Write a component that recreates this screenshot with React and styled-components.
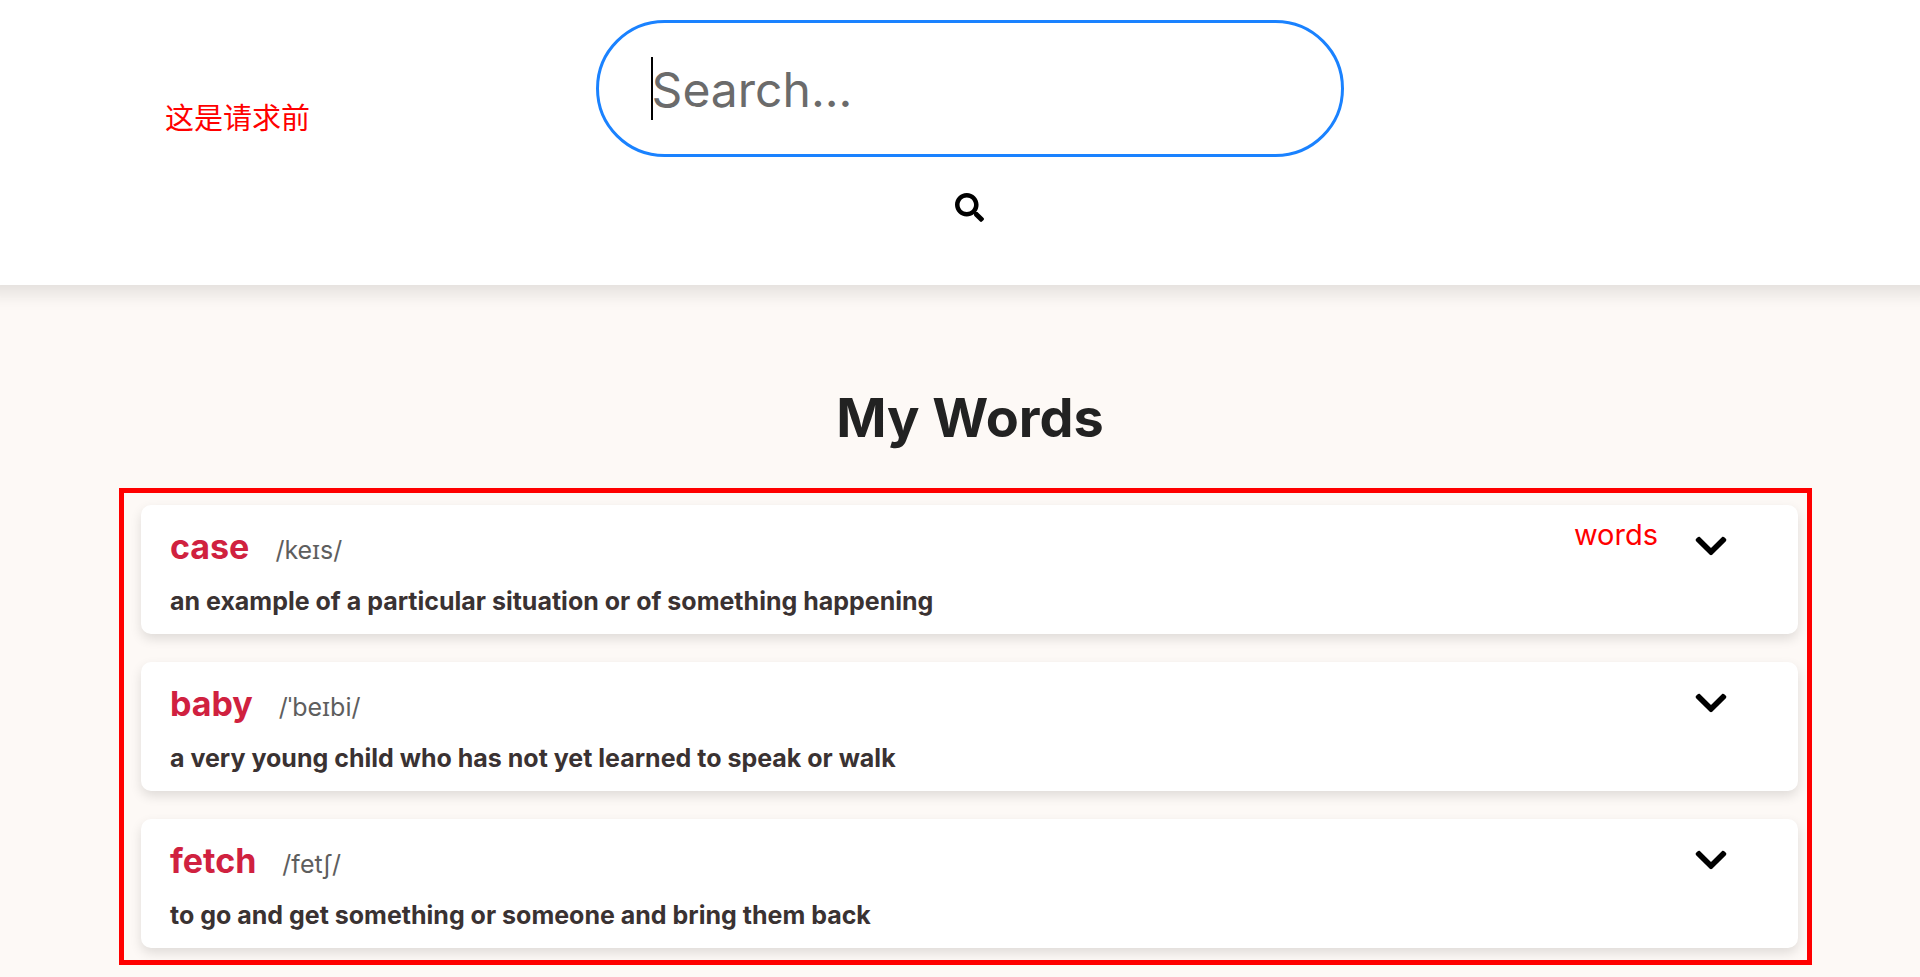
import React from "react";
import styled, { createGlobalStyle } from "styled-components";
import { FaSearch, FaChevronDown } from "react-icons/fa";

const GlobalStyle = createGlobalStyle`
  *, *::before, *::after { box-sizing: border-box; }
  html { background: #fdf9f6; }
  body {
    margin: 0;
    font-family: Inter, "Noto Sans", "Noto Sans CJK SC", sans-serif;
    color: #222;
  }
  h1, h2, p { margin: 0; }
`;

const Header = styled.header`
  position: relative;
  display: flex;
  justify-content: center;
  padding: 20px 0 48px 20px;
  background: #fff;
  box-shadow: 0 -12px 18px 20px rgba(0, 0, 0, 0.11);
`;

const SearchForm = styled.form`
  display: flex;
  flex-direction: column;
  align-items: center;
  gap: 20px;
  width: 39vw;
`;

const SearchField = styled.div`
  position: relative;
  width: 100%;
`;

const SearchInput = styled.input`
  display: block;
  width: 100%;
  height: 137px;
  padding: 2px 53px 0;
  border: 3px solid #1a82ff;
  border-radius: 69px;
  background: #fff;
  font-family: inherit;
  font-size: 48px;
  color: #222;
  outline: none;
  &::placeholder {
    color: #6b6b6b;
    opacity: 1;
  }
`;

const Caret = styled.span`
  position: absolute;
  left: 55px;
  top: 37px;
  width: 2px;
  height: 63px;
  background: #000;
`;

const IconButton = styled.button`
  display: flex;
  align-items: center;
  justify-content: center;
  padding: 0;
  border: 0;
  background: none;
  color: #000;
  font-size: ${(p) => p.$size}px;
  height: ${(p) => p.$height}px;
  cursor: pointer;
`;

const Note = styled.span`
  position: absolute;
  top: ${(p) => p.$top}px;
  left: ${(p) => p.$left};
  right: ${(p) => p.$right};
  font-size: 29px;
  line-height: 40px;
  color: #f00;
`;

const Main = styled.main`
  padding: 96px 0 0 20px;
`;

const Title = styled.h1`
  padding-bottom: 33px;
  font-size: 54px;
  line-height: 74px;
  font-weight: 700;
  text-align: center;
`;

const WordList = styled.ul`
  display: flex;
  flex-direction: column;
  gap: 28px;
  margin: 0 108px 0 99px;
  padding: 12px 9px 12px 17px;
  border: 5px solid #f00;
  list-style: none;
`;

const WordCard = styled.li`
  position: relative;
  display: flex;
  justify-content: space-between;
  align-items: flex-start;
  padding: 18px 69px 13px 29px;
  border-radius: 10px;
  background: #fff;
  box-shadow: 0 5px 12px rgba(0, 0, 0, 0.12);
`;

const WordHead = styled.div`
  display: flex;
  align-items: baseline;
  gap: 26px;
  height: 48px;
  line-height: 48px;
`;

const Word = styled.h2`
  font-size: 34px;
  font-weight: 700;
  color: #d0213f;
`;

const Phonetic = styled.span`
  font-size: 25px;
  color: #5e5e5e;
`;

const Definition = styled.p`
  padding-top: 10px;
  font-size: 25px;
  line-height: 40px;
  font-weight: 700;
  color: #3a3232;
`;

const words = [
  { word: "case", phonetic: "/keɪs/", definition: "an example of a particular situation or of something happening", note: "words" },
  { word: "baby", phonetic: "/ˈbeɪbi/", definition: "a very young child who has not yet learned to speak or walk" },
  { word: "fetch", phonetic: "/fetʃ/", definition: "to go and get something or someone and bring them back" },
];

export default function App() {
  return (
    <>
      <GlobalStyle />
      <Header>
        <Note $top={99} $left="165px">这是请求前</Note>
        <SearchForm role="search" onSubmit={(e) => e.preventDefault()}>
          <SearchField>
            <SearchInput type="text" placeholder="Search..." aria-label="Search" />
            <Caret aria-hidden="true" />
          </SearchField>
          <IconButton type="submit" $size={29} $height={60} aria-label="Search">
            <FaSearch />
          </IconButton>
        </SearchForm>
      </Header>
      <Main>
        <Title>My Words</Title>
        <WordList>
          {words.map((w) => (
            <WordCard key={w.word}>
              <div>
                <WordHead>
                  <Word>{w.word}</Word>
                  <Phonetic>{w.phonetic}</Phonetic>
                </WordHead>
                <Definition>{w.definition}</Definition>
              </div>
              {w.note && <Note $top={10} $right="140px">{w.note}</Note>}
              <IconButton type="button" $size={36} $height={46} aria-label={`Show ${w.word}`}>
                <FaChevronDown />
              </IconButton>
            </WordCard>
          ))}
        </WordList>
      </Main>
    </>
  );
}
